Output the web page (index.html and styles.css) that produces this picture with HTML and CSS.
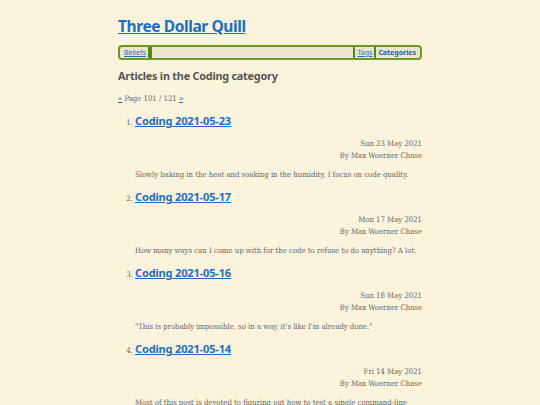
FILE: index.html
```html
<!DOCTYPE html>
<html lang="en">
<head>
  <meta charset="UTF-8">
  <meta name="viewport" content="width=device-width, initial-scale=1.0">
  <title>Articles in the Coding category - Three Dollar Quill</title>
  <link rel="stylesheet" href="styles.css">
</head>
<body>

<div class="page">
  <header class="site-header">
    <h1><a href="#">Three Dollar Quill</a></h1>
    <nav class="site-nav">
      <a href="#">Beliefs</a>
      <span class="nav-gap"></span>
      <a href="#">Tags</a>
      <a href="#" class="active">Categories</a>
    </nav>
  </header>

  <main>
    <h2>Articles in the Coding category</h2>
    <p class="pager"><a href="#">&laquo;</a> Page 101 / 121 <a href="#">&raquo;</a></p>

    <ol class="articles">
      <li>
        <h3><a href="#">Coding 2021-05-23</a></h3>
        <div class="meta">
          <time>Sun 23 May 2021</time>
          <span>By Max Woerner Chase</span>
        </div>
        <p class="summary">Slowly baking in the heat and soaking in the humidity, I focus on code quality.</p>
      </li>
      <li>
        <h3><a href="#">Coding 2021-05-17</a></h3>
        <div class="meta">
          <time>Mon 17 May 2021</time>
          <span>By Max Woerner Chase</span>
        </div>
        <p class="summary">How many ways can I come up with for the code to refuse to do anything? A lot.</p>
      </li>
      <li>
        <h3><a href="#">Coding 2021-05-16</a></h3>
        <div class="meta">
          <time>Sun 16 May 2021</time>
          <span>By Max Woerner Chase</span>
        </div>
        <p class="summary">"This is probably impossible, so in a way, it's like I'm already done."</p>
      </li>
      <li>
        <h3><a href="#">Coding 2021-05-14</a></h3>
        <div class="meta">
          <time>Fri 14 May 2021</time>
          <span>By Max Woerner Chase</span>
        </div>
        <p class="summary">Most of this post is devoted to figuring out how to test a single command-line program.</p>
      </li>
    </ol>
  </main>
</div>

</body>
</html>
```

FILE: styles.css
```css
/* Global Styles */
body {
  margin: 0;
  background-color: #fbf3dc;
  color: #666;
  font-family: 'DejaVu Serif', serif;
  font-stretch: condensed;
  font-size: 7.7px;
}

a {
  color: #1a6fc4;
}

.page {
  width: 304px;
  margin: 0 auto;
  padding-top: 15px;
}

h1, h2, h3, .site-nav {
  font-family: 'Noto Sans', sans-serif;
  font-stretch: normal;
}

/* Header */
.site-header h1 {
  margin: 0 0 8px;
  font-size: 15.5px;
  line-height: 22px;
  letter-spacing: -0.4px;
}

.site-nav {
  display: flex;
  align-items: center;
  height: 11px;
  padding: 0 2px;
  border: 2px solid #6b9a22;
  border-radius: 4px;
  background-color: #ebe4cf;
  font-size: 7px;
  line-height: 11px;
}

.site-nav a {
  padding: 0 2px;
  border-right: 2px solid #4d8a1a;
}

.site-nav a:last-child {
  border-right: none;
}

.site-nav .nav-gap {
  flex: 1;
  height: 11px;
  border-left: 2px solid #4d8a1a;
  border-right: 2px solid #4d8a1a;
}

.site-nav .active {
  font-weight: bold;
  text-decoration: none;
  color: #1d5fa3;
}

/* Main */
h2 {
  margin: 8px 0 9px;
  font-size: 10.8px;
  line-height: 16px;
  letter-spacing: -0.2px;
  color: #555;
}

.pager {
  margin: 0 0 8px;
  line-height: 12px;
}

.articles {
  margin: 0;
  padding-left: 17px;
}

.articles li {
  margin-bottom: 8px;
}

.articles h3 {
  margin: 0;
  font-size: 11px;
  line-height: 16px;
  letter-spacing: -0.15px;
}

.meta {
  display: flex;
  flex-direction: column;
  align-items: flex-end;
  margin-top: 9px;
  line-height: 12px;
}

.summary {
  margin: 7px 0 0;
  line-height: 12px;
}
```
